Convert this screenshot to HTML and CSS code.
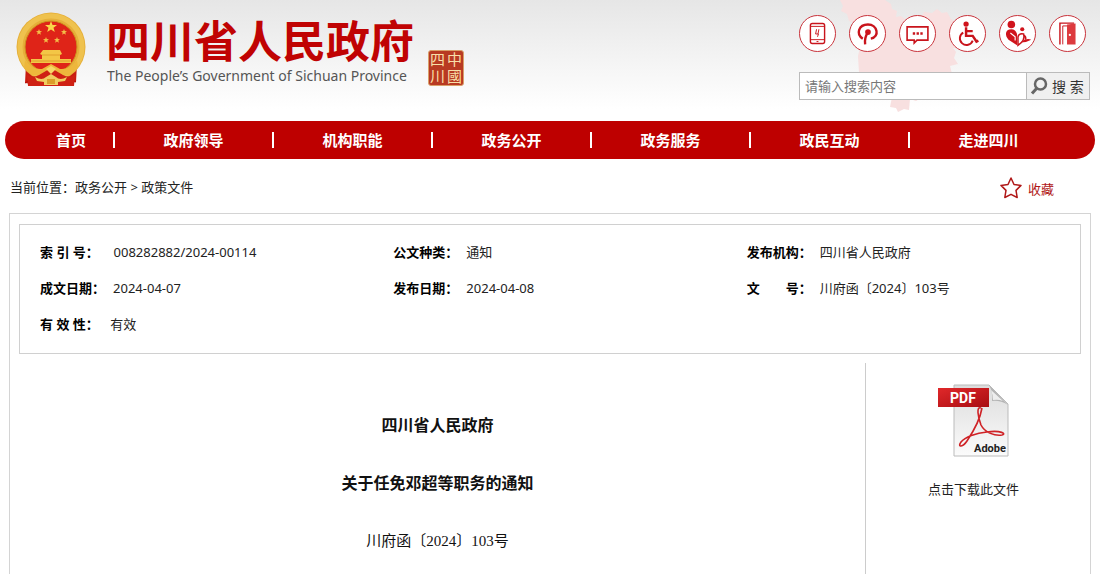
FILE: index.html
```
<!DOCTYPE html>
<html lang="zh-CN">
<head>
  <meta charset="UTF-8">
  <meta name="viewport" content="width=device-width, initial-scale=1.0">
  <title>四川省人民政府</title>
  <link rel="stylesheet" href="styles.css">
</head>
<body>
  <header class="header">
    <svg class="map" viewBox="0 0 150 114" aria-hidden="true">
      <path d="M10 0 L13 6 11 11 17 14 19 21 25 23 24 29 28 34 27 43 30 48 28 56 29 72 33 75 37 83 44 80 48 87 54 86 56 94 62 97 60 107 66 108 68 112 74 109 79 110 80 99 86 101 91 98 90 90 96 87 102 83 108 86 116 84 117 77 122 74 120 66 128 64 124 58 126 52 123 48 131 48 137 43 136 36 140 31 136 25 137 19 130 19 126 22 121 19 117 12 112 13 107 9 102 13 94 12 91 18 87 22 82 16 76 20 71 16 66 17 67 11 62 9 61 4 55 0 Z"/>
    </svg>
    <a class="logo" href="#">
      <svg class="emblem" viewBox="0 0 70 74" aria-hidden="true">
        <path d="M10 52 L9 71 24 73 29 69 41 69 46 73 60 70 61 52Z" fill="#c81c10"/>
        <path d="M9 71 L16 67 24 73 M60 70 L53 67 46 73" stroke="#b01208" fill="none"/>
        <circle cx="35" cy="35" r="34.500" fill="#e6b03a"/>
        <circle cx="35" cy="35" r="31" fill="none" stroke="#efc24e" stroke-width="5"/>
        <circle cx="35" cy="35" r="26" fill="#df2418" stroke="#cf921f"/>
        <path d="M35 9l1.500 4 4.500.1-3.500 2.700 1.300 4.200-3.800-2.500-3.800 2.500 1.300-4.200L29 13.100l4.500-.1z" fill="#fad74a"/>
        <g fill="#f3bd48">
          <path d="M23 17l.8 2.100 2.200.1-1.700 1.400.6 2.200-1.900-1.200-1.900 1.200.6-2.200L20 19.200l2.200-.1z"/>
          <path d="M48 17l.8 2.100 2.200.1-1.700 1.400.6 2.200-1.900-1.200-1.900 1.200.6-2.200L45 19.200l2.200-.1z"/>
          <path d="M30 25l.8 2.100 2.200.1-1.700 1.400.6 2.200-1.900-1.200-1.900 1.200.6-2.200L27 27.200l2.200-.1z"/>
          <path d="M41 25l.8 2.100 2.200.1-1.700 1.400.6 2.200-1.900-1.200-1.900 1.200.6-2.200L38 27.200l2.200-.1z"/>
        </g>
        <path d="M27 38h17l2 4-2 1v4h11v4H15v-4h11v-4l-2-1z" fill="#f3c646"/>
        <path d="M26 43h18M15 49h40" stroke="#e0a02c"/>
        <path d="M9 48q7 10 17 9l9-5 9 5q10 1 17-9l1 8-8 7-12 1-7-4-7 4-12-1-8-7z" fill="#edb73c"/>
        <path d="M11 63q6 3 12 0l12-7 12 7q6 3 12 0l-1 11H12z" fill="#cf2114"/>
        <path d="M30 57l5-3 5 3-5 5z" fill="#f6d768"/>
        <path d="M19 65q7 4 11 0l5-3 5 3q4 4 11 0l-2 4-7 1v3H28v-3l-7-1z" fill="#f0cd60"/>
        <path d="M31 67h8v5h-8z" fill="#dc9d2a"/>
      </svg>
      <span class="logo-text">
        <span class="logo-cn">四川省人民政府</span>
        <span class="logo-en">The People’s Government of Sichuan Province</span>
      </span>
      <span class="seal" aria-hidden="true">
        <span>四</span><span>中</span>
        <span>川</span><span>國</span>
      </span>
    </a>
    <div class="tools">
      <ul class="icons">
        <li><a href="#" aria-label="手机版">
          <svg viewBox="0 0 37 37">
            <rect x="11" y="8" width="15" height="21" rx="2" stroke-width="1.500"/>
            <path d="M11 11h15M11 25h15M17.500 27h2M17.500 14l-1 5h3l-1 3M20 14l-1 5"/>
          </svg></a></li>
        <li><a href="#" aria-label="政务微博">
          <svg viewBox="0 0 37 37">
            <path d="M13.500 24C6 19 9 9 19 9s13 13 3 15" stroke-width="2.500"/>
            <circle cx="19" cy="17" r="3" class="solid"/>
            <path d="M19 17q-4 6-3 13" stroke-width="2.500"/>
          </svg></a></li>
        <li><a href="#" aria-label="互动留言">
          <svg viewBox="0 0 37 37">
            <path d="M7.500 11.500h22v14H18l-3 3v-3H7.500z" stroke-width="1.700"/>
            <path d="M13.500 18.500h2.500M17.500 18.500h2.500M21.500 18.500h2.500" stroke-width="2.500"/>
          </svg></a></li>
        <li><a href="#" aria-label="无障碍浏览">
          <svg viewBox="0 0 37 37">
            <circle cx="17" cy="8.500" r="2.800" class="solid"/>
            <path d="M17 12v9h7l4 6 2-1M17 16h7" stroke-width="2.600"/>
            <path d="M14 17.500a7 7 0 1 0 10 8.500" stroke-width="2"/>
          </svg></a></li>
        <li><a href="#" aria-label="长者助手">
          <svg viewBox="0 0 37 37">
            <circle cx="12" cy="9" r="4" class="solid"/>
            <path d="M12 14c-7 0-7 7-3 11l9 6V19c-1-3-3-5-6-5z" class="solid"/>
            <path d="M11 18l5 4v4" stroke="#fff" stroke-width="1.200"/>
            <circle cx="23.500" cy="14" r="2.200" class="solid"/>
            <path d="M19 31q8-5 6-12-5-1-6 3zM25 20q3 2 2 5" stroke-width="1.600"/>
            <path d="M22 28q5-5 11-3-5 3-11 3z" class="solid"/>
          </svg></a></li>
        <li><a href="#" aria-label="登录">
          <svg viewBox="0 0 37 37">
            <path d="M10.500 30V7.500h15" stroke-width="1.500"/>
            <path d="M13.500 30V10.500h5" stroke-width="1"/>
            <path d="M18 9l9-1v22h-9z" class="solid door"/>
            <circle cx="21" cy="20" r="1.200" fill="#fff" stroke="none"/>
          </svg></a></li>
      </ul>
      <form class="search">
        <input type="text" placeholder="请输入搜索内容" aria-label="搜索内容">
        <button type="button">
          <svg viewBox="0 0 18 18" aria-hidden="true">
            <circle cx="10.500" cy="7" r="5.500" fill="none" stroke="#666" stroke-width="2.500"/>
            <path d="M7 11l-5 5.500" stroke="#666" stroke-width="3"/>
          </svg>
          <span>搜 索</span>
        </button>
      </form>
    </div>
  </header>

  <nav class="nav">
    <ul>
      <li class="home"><a href="#">首页</a></li>
      <li><a href="#">政府领导</a></li>
      <li><a href="#">机构职能</a></li>
      <li><a href="#">政务公开</a></li>
      <li><a href="#">政务服务</a></li>
      <li><a href="#">政民互动</a></li>
      <li><a href="#">走进四川</a></li>
    </ul>
  </nav>

  <div class="position">
    <p>当前位置：<a href="#">政务公开</a> &gt; <a href="#">政策文件</a></p>
    <button type="button" class="collect">
      <svg viewBox="0 0 24 24" aria-hidden="true">
        <path d="M12 2l3 6.500 7 .9-5 5 1.200 7.100L12 18.300 5.800 21.500 7 14.400l-5-5 7-.9z"/>
      </svg>
      <span>收藏</span>
    </button>
  </div>

  <main class="content">
    <div class="info">
      <table>
        <tr>
          <td><strong>索&nbsp;引&nbsp;号：&nbsp;&nbsp;</strong>008282882/2024-00114</td>
          <td><strong>公文种类：</strong>通知</td>
          <td><strong>发布机构：</strong>四川省人民政府</td>
        </tr>
        <tr>
          <td><strong>成文日期：</strong>2024-04-07</td>
          <td><strong>发布日期：</strong>2024-04-08</td>
          <td><strong>文　　号：</strong>川府函〔2024〕103号</td>
        </tr>
        <tr>
          <td><strong>有&nbsp;效&nbsp;性：&nbsp;</strong>有效</td>
          <td></td>
          <td></td>
        </tr>
      </table>
    </div>
    <div class="main">
      <article class="article">
        <h1>四川省人民政府</h1>
        <h2>关于任免邓超等职务的通知</h2>
        <p>川府函〔2024〕103号</p>
      </article>
      <aside class="download">
        <a href="#">
          <svg viewBox="0 0 74 74" aria-hidden="true">
            <defs>
              <linearGradient id="paper" x1="0" y1="0" x2="0" y2="1">
                <stop offset="0" stop-color="#dcdcdc"/>
                <stop offset="1" stop-color="#fbfbfb"/>
              </linearGradient>
              <linearGradient id="label" x1="0" y1="0" x2="1" y2="1">
                <stop offset="0" stop-color="#e0282a"/>
                <stop offset="1" stop-color="#a80d12"/>
              </linearGradient>
            </defs>
            <path d="M17 1h35l19 19v52H17z" fill="url(#paper)" stroke="#bbb"/>
            <path d="M52 1l19 20q-8-5-16-4 1-9-3-16z" fill="#b4b4b4"/>
            <path d="M54 6l12 11q-5-2-10-1 0-5-2-10z" fill="#eee"/>
            <rect x="1" y="4" width="51" height="19" fill="url(#label)"/>
            <text x="26" y="19" class="pdf">PDF</text>
            <path d="M44 24c-5-2-3 9 0 17 4 8 14 11 21 10 5-1-1-5-15-3-11 1-22 5-26 10-4 6 2 5 6-1 6-9 13-21 15-33" fill="none" stroke="#cf2226" stroke-width="1.600"/>
            <text x="53" y="68" class="adobe">Adobe</text>
          </svg>
          <span>点击下载此文件</span>
        </a>
      </aside>
    </div>
  </main>
</body>
</html>
```
FILE: styles.css
```
*{
    margin: 0;
    padding: 0;
    box-sizing: border-box;
}
body{
    display: flex;
    flex-direction: column;
    min-height: 100vh;
    background-color: #fff;
    color: #222;
    font-family: "Noto Sans", "Noto Sans CJK SC", sans-serif;
    font-size: 13px;
}
a{
    color: inherit;
    text-decoration: none;
}
ul{
    list-style: none;
}
button, input{
    font-family: inherit;
}

/* header */
.header{
    position: relative;
    display: flex;
    justify-content: space-between;
    height: 121px;
    padding: 0 10px 0 16px;
    background: linear-gradient(#e6e6e6, #fff 90%);
}
.map{
    position: absolute;
    top: 0;
    right: 120px;
    width: 150px;
    height: 114px;
    fill: #f8e0e0;
}
.logo{
    display: flex;
    align-items: flex-start;
    padding-top: 12px;
}
.emblem{
    width: 70px;
    height: 74px;
}
.logo-text{
    display: flex;
    flex-direction: column;
    margin-left: 20px;
}
.logo-cn{
    padding-top: 6px;
    font-family: "Liberation Sans", "Noto Sans CJK SC", sans-serif;
    font-size: 44px;
    font-weight: 700;
    line-height: 50px;
    color: #c00303;
}
.logo-en{
    padding-left: 1px;
    font-size: 14px;
    line-height: 16px;
    color: #555;
}
.seal{
    display: grid;
    grid-template-columns: 1fr 1fr;
    width: 36px;
    height: 36px;
    margin: 38px 0 0 14px;
    border: 1px solid #d9a06a;
    border-radius: 3px;
    background-color: #b83a22;
    color: #f8dfa8;
    font-family: "Liberation Sans", "Noto Sans CJK SC", sans-serif;
    font-size: 15px;
    line-height: 17px;
    text-align: center;
}
.tools{
    position: relative;
    width: 291px;
    padding-top: 15px;
}
.icons{
    display: flex;
    gap: 13px;
}
.icons a{
    display: block;
    width: 37px;
    height: 37px;
    border: 1px solid #c9343c;
    border-radius: 50%;
    background-color: #fff;
}
.icons svg{
    display: block;
    width: 35px;
    height: 35px;
    fill: none;
    stroke: #c9141c;
}
.icons .solid{
    fill: #d0141c;
    stroke: none;
}
.icons .door{
    fill: #dd3a3e;
}
.search{
    display: flex;
    height: 28px;
    margin-top: 20px;
    border: 1px solid #bbb;
    background-color: #fff;
}
.search input{
    flex: 1;
    min-width: 0;
    padding: 0 5px;
    border: none;
    font-size: 13px;
    background: none;
}
.search input::placeholder{
    color: #777;
}
.search button{
    display: flex;
    align-items: center;
    gap: 4px;
    width: 63px;
    padding: 0 3px;
    border: none;
    border-left: 1px solid #bbb;
    background-color: #f0f0f0;
    color: #333;
    font-size: 14px;
    white-space: nowrap;
}
.search svg{
    width: 18px;
    height: 18px;
    flex: none;
}

/* nav */
.nav{
    margin: 0 5px;
    padding: 0 28px 0 24px;
    border-radius: 19px;
    background-color: #be0000;
}
.nav ul{
    display: flex;
    align-items: center;
    height: 38px;
}
.nav li{
    flex: 1;
    text-align: center;
    font-size: 15px;
    font-weight: 700;
    line-height: 16px;
    color: #fff;
}
.nav li + li{
    border-left: 2px solid #fff;
}
.nav .home{
    flex: 0 0 84px;
}

/* breadcrumb */
.position{
    display: flex;
    justify-content: space-between;
    align-items: center;
    height: 54px;
    padding: 0 46px 0 10px;
}
.collect{
    display: flex;
    align-items: center;
    gap: 5px;
    padding-top: 4px;
    border: none;
    background: none;
    color: #b01818;
    font-size: 13px;
}
.collect svg{
    width: 24px;
    height: 24px;
    fill: none;
    stroke: #b01818;
    stroke-width: 1.5;
    stroke-linejoin: round;
}

/* content */
.content{
    display: flex;
    flex-direction: column;
    flex: 1;
    margin: 0 9px;
    border: 1px solid #d4d4d4;
    border-bottom: none;
}
.info{
    margin: 10px 9px 9px;
    padding: 9px 0 11px;
    border: 1px solid #d0d0d0;
}
.info table{
    width: 100%;
    border-collapse: collapse;
    table-layout: fixed;
}
.info td{
    height: 36px;
    padding-left: 20px;
    line-height: 36px;
}
.info strong{
    margin-right: 8px;
    color: #000;
}
.main{
    display: flex;
    flex: 1;
    padding-right: 9px;
}
.article{
    flex: 1;
    padding-top: 33px;
    text-align: center;
    line-height: 58px;
    color: #111;
}
.article h1, .article h2{
    font-size: 16px;
    font-weight: 700;
}
.article p{
    font-family: "Liberation Serif", "Noto Sans CJK SC", serif;
    font-size: 15px;
}
.download{
    width: 216px;
    padding-top: 21px;
    border-left: 1px solid #ccc;
}
.download a{
    display: flex;
    flex-direction: column;
    align-items: center;
    gap: 21px;
}
.download svg{
    width: 74px;
    height: 74px;
}
.download .pdf{
    font-family: Roboto, sans-serif;
    font-size: 14px;
    font-weight: 700;
    text-anchor: middle;
    fill: #fff;
}
.download .adobe{
    font-family: Roboto, sans-serif;
    font-size: 11px;
    font-weight: 700;
    text-anchor: middle;
    fill: #222;
}
```
